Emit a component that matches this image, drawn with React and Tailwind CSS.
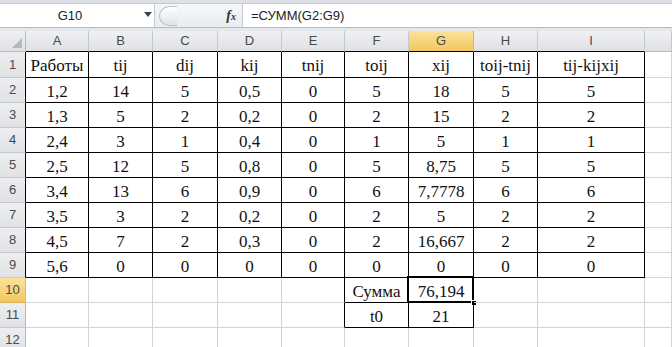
import React from "react";

const cols = ["A", "B", "C", "D", "E", "F", "G", "H", "I", ""];

const rows = [
  ["Работы", "tij", "dij", "kij", "tnij", "toij", "xij", "toij-tnij", "tij-kijxij"],
  ["1,2", "14", "5", "0,5", "0", "5", "18", "5", "5"],
  ["1,3", "5", "2", "0,2", "0", "2", "15", "2", "2"],
  ["2,4", "3", "1", "0,4", "0", "1", "5", "1", "1"],
  ["2,5", "12", "5", "0,8", "0", "5", "8,75", "5", "5"],
  ["3,4", "13", "6", "0,9", "0", "6", "7,7778", "6", "6"],
  ["3,5", "3", "2", "0,2", "0", "2", "5", "2", "2"],
  ["4,5", "7", "2", "0,3", "0", "2", "16,667", "2", "2"],
  ["5,6", "0", "0", "0", "0", "0", "0", "0", "0"],
  ["", "", "", "", "", "Сумма", "76,194", "", ""],
  ["", "", "", "", "", "t0", "21", "", ""],
  ["", "", "", "", "", "", "", "", ""],
];

// black bordered area: rows 1-9 all columns A..I, rows 10-11 only F,G
const inTable = (r, c) => (r <= 9 && c <= 8) || ((r === 10 || r === 11) && (c === 5 || c === 6));

const HeaderCell = ({children, active, blackBottom}) => (
  <div
    className={`h-[21px] flex items-center justify-center border-r border-b text-[13px] text-[#4a4a4a] ${
      active
        ? "bg-gradient-to-b from-[#fbe39a] to-[#f2c660] border-r-[#d9b35a]"
        : "bg-gradient-to-b from-[#eef0f2] to-[#dfe1e4] border-r-[#c5c8cd]"
    } ${blackBottom ? "border-b-black" : "border-b-[#b8bcc2]"}`}
  >
    {children}
  </div>
);

const RowHeader = ({n, active, blackRight}) => (
  <div
    className={`flex items-center justify-center border-b text-[13px] text-[#4a4a4a] ${
      n === 1 ? "h-[26px]" : "h-[25px]"
    } ${
      active
        ? "bg-gradient-to-b from-[#fbe39a] to-[#f2c660] border-b-[#d9b35a]"
        : "bg-gradient-to-b from-[#eceef0] to-[#e0e2e5] border-b-[#c5c8cd]"
    } ${blackRight ? "border-r border-r-black" : "border-r border-r-[#b8bcc2]"}`}
  >
    {n}
  </div>
);

const App = () => {
  return (
    <div className="w-[672px] h-[347px] overflow-hidden bg-white font-['Liberation_Sans',Arial,sans-serif]">
      {/* ribbon bottom */}
      <div className="h-[4px] bg-[#dde1e7] border-b border-[#c3c9d1]"></div>

      {/* formula bar */}
      <div className="h-[24px] flex bg-white border-b border-[#b6bcc5]">
        <div className="w-[155px] flex items-center border-r border-[#c3c9d1] relative">
          <span className="w-[140px] text-center text-[13px] text-[#222]">G10</span>
          <span className="absolute left-[144px] top-[8px] w-0 h-0 border-l-[4px] border-r-[4px] border-t-[5px] border-l-transparent border-r-transparent border-t-[#444]"></span>
        </div>
        <div className="w-[88px] flex items-center bg-gradient-to-b from-[#f6f7f9] to-[#e9ecf0] border-r border-[#c3c9d1]">
          <div className="ml-[4px] w-[18px] h-[20px] rounded-l-full border border-r-0 border-[#b9bec6] bg-gradient-to-b from-white to-[#dfe2e6]"></div>
          <span className="ml-auto mr-[6px] text-[14px] italic font-bold text-[#333] font-['Liberation_Serif',serif]">
            f<span className="text-[10px]">x</span>
          </span>
        </div>
        <div className="flex-1 flex items-center pl-[8px] text-[13px] text-[#222]">=СУММ(G2:G9)</div>
      </div>

      <div className="h-[3px] bg-[#e4e7eb]"></div>

      {/* sheet grid */}
      <div className="grid grid-cols-[26px_63px_64px_65px_64px_63px_64px_65px_64px_107px_1fr]">
        <div className="h-[21px] relative bg-gradient-to-b from-[#eef0f2] to-[#dfe1e4] border-r border-b border-[#b8bcc2]">
          <svg className="absolute right-[3px] bottom-[3px]" width="10" height="10" viewBox="0 0 10 10">
            <polygon points="10,0 10,10 0,10" fill="#b5b8bd" />
          </svg>
        </div>
        {cols.map((c, i) => (
          <HeaderCell key={i} active={c === "G"} blackBottom={i <= 8}>
            {c}
          </HeaderCell>
        ))}

        {rows.map((row, ri) => {
          const r = ri + 1;
          return (
            <React.Fragment key={r}>
              <RowHeader n={r} active={r === 10} blackRight={r <= 9} />
              {[...row, ""].map((val, ci) => {
                const here = inTable(r, ci);
                const rightBlack = here || inTable(r, ci + 1);
                const bottomBlack = here || inTable(r + 1, ci);
                const selected = r === 10 && ci === 6;
                return (
                  <div
                    key={ci}
                    className={`relative flex items-center justify-center pt-[3px] border-r border-b text-[17px] text-[#111] font-['Liberation_Serif','Times_New_Roman',serif] whitespace-nowrap ${
                      r === 1 ? "h-[26px]" : "h-[25px]"
                    } ${rightBlack ? "border-r-black" : "border-r-[#d4d4d4]"} ${
                      bottomBlack ? "border-b-black" : "border-b-[#d4d4d4]"
                    }`}
                  >
                    {val}
                    {selected && (
                      <>
                        <span className="absolute left-[-2px] top-[-2px] right-[-1px] bottom-[-1px] border-2 border-black"></span>
                        <span className="absolute right-[-4px] bottom-[-4px] w-[6px] h-[6px] bg-black border border-white"></span>
                      </>
                    )}
                  </div>
                );
              })}
            </React.Fragment>
          );
        })}
      </div>
    </div>
  );
};

export default App;
